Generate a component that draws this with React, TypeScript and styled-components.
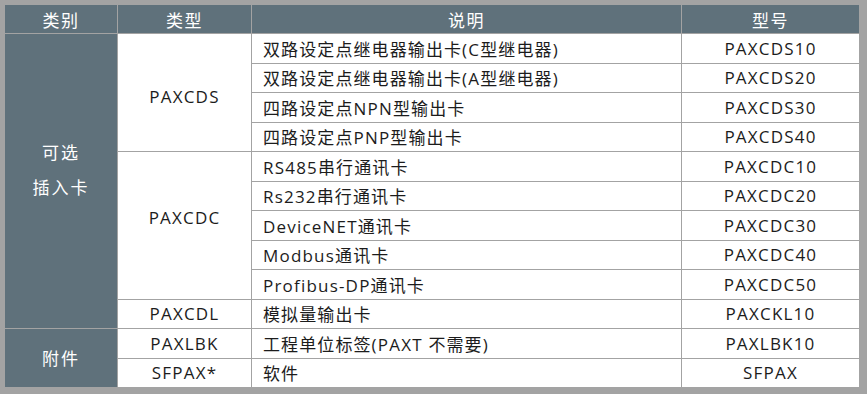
import React from "react";
import styled, { createGlobalStyle } from "styled-components";

const GlobalStyle = createGlobalStyle`
  html, body {
    margin: 0;
    padding: 0;
    background: #a3a3a3;
  }
`;

const Frame = styled.div`
  width: 867px;
  height: 394px;
  box-sizing: border-box;
  padding: 5px 7px 6px 4px;
  background: #a3a3a3;
  font-family: "Open Sans", "Noto Sans CJK SC", sans-serif;
`;

const Table = styled.table`
  width: 100%;
  height: 100%;
  border-collapse: collapse;
  table-layout: fixed;
  background: #fff;
  color: #1c1c1c;
  font-size: 17px;
  letter-spacing: 1.1px;
`;

const HeadCell = styled.th<{ $w?: number }>`
  width: ${(p) => (p.$w ? `${p.$w}px` : "auto")};
  height: 28px;
  padding: 0;
  background: #5f717b;
  color: #fff;
  font-weight: normal;
  font-size: 17px;
  letter-spacing: 1.5px;
  text-align: center;
  border: 1px solid #a3a3a3;
  border-top: none;
`;

const Cell = styled.td<{ $align?: "left" | "center"; $dark?: boolean; $shift?: number }>`
  padding: 0 ${(p) => (p.$align === "left" ? "11px" : "0")};
  text-align: ${(p) => p.$align ?? "center"};
  vertical-align: middle;
  white-space: nowrap;
  border: 1px solid #a3a3a3;
  background: ${(p) => (p.$dark ? "#5f717b" : "#fff")};
  color: ${(p) => (p.$dark ? "#fff" : "#1c1c1c")};
  padding-top: ${(p) => (p.$shift && p.$shift > 0 ? p.$shift * 2 : 0)}px;
  padding-bottom: ${(p) => (p.$shift && p.$shift < 0 ? -p.$shift * 2 : 0)}px;
`;

const Latin = styled.span`
  letter-spacing: 1.2px;
`;

const CategoryText = styled.div<{ $lift?: boolean }>`
  line-height: 35px;
  font-size: 17px;
  letter-spacing: 2px;
  padding-bottom: ${(p) => (p.$lift ? "22px" : "0")};
`;

// wrap latin runs so they get the tracking of the original
function Text({ children }: { children: string }) {
  const parts = children.split(/([\x20-\x7e]+)/).filter(Boolean);
  return (
    <>
      {parts.map((p, i) =>
        /^[\x20-\x7e]+$/.test(p) ? <Latin key={i}>{p}</Latin> : <span key={i}>{p}</span>
      )}
    </>
  );
}

interface Item {
  desc: string;
  model: string;
}

interface Group {
  type: string;
  shift?: number;
  items: Item[];
}

interface Category {
  name: string[];
  groups: Group[];
}

const data: Category[] = [
  {
    name: ["可选", "插入卡"],
    groups: [
      {
        type: "PAXCDS",
        shift: 4,
        items: [
          { desc: "双路设定点继电器输出卡(C型继电器)", model: "PAXCDS10" },
          { desc: "双路设定点继电器输出卡(A型继电器)", model: "PAXCDS20" },
          { desc: "四路设定点NPN型输出卡", model: "PAXCDS30" },
          { desc: "四路设定点PNP型输出卡", model: "PAXCDS40" },
        ],
      },
      {
        type: "PAXCDC",
        shift: -8,
        items: [
          { desc: "RS485串行通讯卡", model: "PAXCDC10" },
          { desc: "Rs232串行通讯卡", model: "PAXCDC20" },
          { desc: "DeviceNET通讯卡", model: "PAXCDC30" },
          { desc: "Modbus通讯卡", model: "PAXCDC40" },
          { desc: "Profibus-DP通讯卡", model: "PAXCDC50" },
        ],
      },
      {
        type: "PAXCDL",
        items: [{ desc: "模拟量输出卡", model: "PAXCKL10" }],
      },
    ],
  },
  {
    name: ["附件"],
    groups: [
      { type: "PAXLBK", items: [{ desc: "工程单位标签(PAXT 不需要)", model: "PAXLBK10" }] },
      { type: "SFPAX*", items: [{ desc: "软件", model: "SFPAX" }] },
    ],
  },
];

export default function App() {
  const rows: React.ReactNode[] = [];
  data.forEach((cat, ci) => {
    const catSpan = cat.groups.reduce((n, g) => n + g.items.length, 0);
    cat.groups.forEach((g, gi) => {
      g.items.forEach((it, ii) => {
        rows.push(
          <tr key={`${ci}-${gi}-${ii}`}>
            {gi === 0 && ii === 0 && (
              <Cell $dark rowSpan={catSpan}>
                <CategoryText $lift={catSpan > 2}>
                  {cat.name.map((n) => (
                    <div key={n}>{n}</div>
                  ))}
                </CategoryText>
              </Cell>
            )}
            {ii === 0 && (
              <Cell rowSpan={g.items.length} $shift={g.shift}>
                <Text>{g.type}</Text>
              </Cell>
            )}
            <Cell $align="left">
              <Text>{it.desc}</Text>
            </Cell>
            <Cell>
              <Text>{it.model}</Text>
            </Cell>
          </tr>
        );
      });
    });
  });

  return (
    <>
      <GlobalStyle />
      <Frame>
        <Table>
          <thead>
            <tr>
              <HeadCell $w={112}>类别</HeadCell>
              <HeadCell $w={133}>类型</HeadCell>
              <HeadCell>说明</HeadCell>
              <HeadCell $w={177}>型号</HeadCell>
            </tr>
          </thead>
          <tbody>{rows}</tbody>
        </Table>
      </Frame>
    </>
  );
}
